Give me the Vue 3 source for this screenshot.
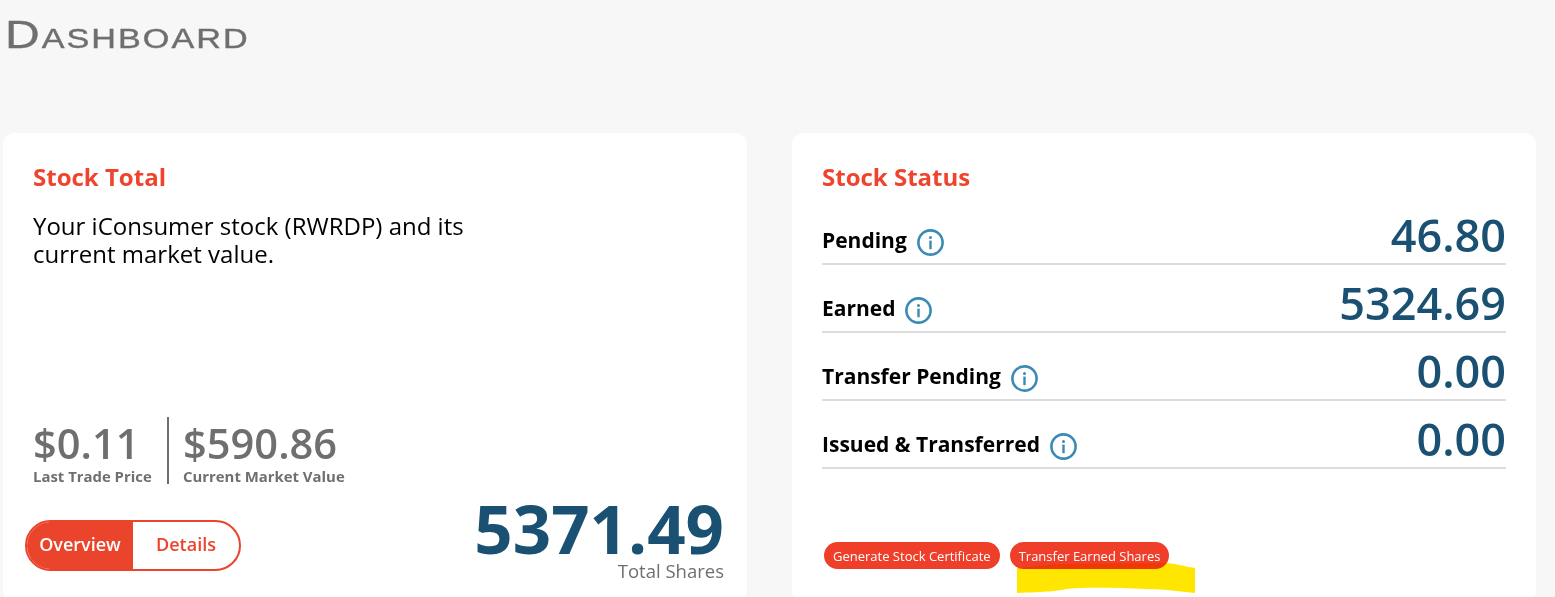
<script setup>
const rows = [
  { label: 'Pending', value: '46.80' },
  { label: 'Earned', value: '5324.69' },
  { label: 'Transfer Pending', value: '0.00' },
  { label: 'Issued & Transferred', value: '0.00' },
]
</script>

<template>
  <div class="page">
    <h1 class="heading">Dashboard</h1>
    <div class="cards">
      <section class="card left">
        <h2 class="title">Stock Total</h2>
        <p class="desc">Your iConsumer stock (RWRDP) and its current market value.</p>
        <div class="prices">
          <div class="price first">
            <div class="amount">$0.11</div>
            <div class="caption">Last Trade Price</div>
          </div>
          <div class="price second">
            <div class="amount">$590.86</div>
            <div class="caption">Current Market Value</div>
          </div>
        </div>
        <div class="bottom">
          <div class="toggle">
            <span class="tab active">Overview</span>
            <span class="tab">Details</span>
          </div>
          <div class="total">
            <div class="total-value">5371.49</div>
            <div class="total-label">Total Shares</div>
          </div>
        </div>
      </section>
      <section class="card right">
        <h2 class="title">Stock Status</h2>
        <div class="rows">
          <div v-for="r in rows" :key="r.label" class="row">
            <span class="label">{{ r.label }}</span>
            <svg class="info" viewBox="0 0 27 27" width="27" height="27" aria-hidden="true">
              <circle cx="13.5" cy="13.5" r="12.1" fill="none" stroke="#3a8ab5" stroke-width="2.6" />
              <circle cx="13.5" cy="8.6" r="1.5" fill="#3a8ab5" />
              <rect x="12.3" y="11.6" width="2.4" height="8.6" fill="#3a8ab5" />
            </svg>
            <span class="value">{{ r.value }}</span>
          </div>
        </div>
        <div class="actions">
          <button class="pill">Generate Stock Certificate</button>
          <button class="pill">Transfer Earned Shares</button>
        </div>
      </section>
    </div>
    <svg class="marker" viewBox="0 0 178 34" width="178" height="34" aria-hidden="true">
      <path d="M0 8 L40 4 L150 3 C160 4 170 7 178 8 L178 33 C165 32 150 29 130 29 C100 28 70 27 50 29 C40 31 30 32 0 33 Z" fill="#ffe600" />
    </svg>
  </div>
</template>

<style>
html, body { margin: 0; background: #f7f7f7; overflow: hidden; }
</style>

<style scoped>
.page {
  position: relative;
  height: 597px;
  overflow: hidden;
  background: #f7f7f7;
  font-family: "Open Sans", "Liberation Sans", sans-serif;
}
.heading {
  margin: 0;
  height: 133px;
  padding: 13px 0 0 5px;
  box-sizing: border-box;
  font-family: "Liberation Sans", Arial, sans-serif;
  font-variant: small-caps;
  font-weight: 400;
  font-size: 38px;
  line-height: 44px;
  letter-spacing: 1.6px;
  color: #6f6f6f;
  -webkit-text-stroke: 0.4px #6f6f6f;
  transform: scaleX(1.265);
  transform-origin: 5px 0;
}
.cards {
  display: grid;
  grid-template-columns: 744px 744px;
  column-gap: 45px;
  padding-left: 3px;
}
.card {
  background: #fff;
  border-radius: 12px;
  height: 470px;
  box-sizing: border-box;
  padding: 29px 30px 30px;
  position: relative;
}
.title {
  margin: 0;
  font-size: 24px;
  line-height: 30px;
  font-weight: 700;
  color: #ee442d;
}
.desc {
  margin: 20px 0 0;
  width: 450px;
  font-size: 24px;
  line-height: 28px;
  color: #000;
}
.left { display: flex; flex-direction: column; }
.prices {
  display: flex;
  margin-top: 149px;
  height: 67px;
}
.price { display: flex; flex-direction: column; }
.first { padding-right: 15px; border-right: 2px solid #6f6f6f; width: 119px; }
.second { padding-left: 14px; }
.amount {
  font-size: 41.6px;
  line-height: 50px;
  margin-top: 1px;
  font-weight: 600;
  color: #6f6f6f;
  white-space: nowrap;
}
.caption {
  font-size: 14.9px;
  line-height: 15px;
  margin-top: 1px;
  font-weight: 700;
  color: #6f6f6f;
  white-space: nowrap;
}
.bottom {
  display: flex;
  justify-content: space-between;
  align-items: flex-start;
  margin: 8px -7px 0 -8px;
}
.toggle {
  display: flex;
  margin-top: 28px;
  width: 216px;
  height: 51px;
  box-sizing: border-box;
  border: 2px solid #ea442c;
  border-radius: 26px;
  overflow: hidden;
}
.tab {
  display: flex;
  align-items: center;
  justify-content: center;
  flex: 1;
  padding-bottom: 3px;
  font-size: 18px;
  font-weight: 600;
  color: #ea442c;
}
.tab.active {
  flex: 0 0 106px;
  background: #ea442c;
  color: #fff;
}
.total { text-align: right; }
.total-value {
  font-size: 67.2px;
  line-height: 72px;
  font-weight: 700;
  color: #1a5172;
}
.total-label {
  margin-top: -4px;
  font-size: 18.5px;
  line-height: 22px;
  color: #6f6f6f;
}
.rows { margin-top: 17px; }
.row {
  display: flex;
  align-items: flex-end;
  height: 68px;
  box-sizing: border-box;
  border-bottom: 2px solid #dcdcdc;
}
.row:first-child { height: 56px; }
.label {
  font-size: 21px;
  line-height: 28px;
  font-weight: 700;
  color: #000;
  margin-bottom: 9px;
}
.info { margin: 0 0 7px 10px; flex: none; }
.value {
  margin-left: auto;
  font-size: 45px;
  line-height: 56px;
  font-weight: 600;
  color: #1a5172;
}
.actions {
  position: absolute;
  left: 32px;
  top: 409px;
  display: flex;
  gap: 10px;
}
.pill {
  height: 27px;
  padding: 0 9px;
  border: 0;
  border-radius: 14px;
  background: #ef3f2a;
  color: #fff;
  font-family: inherit;
  font-size: 13px;
  white-space: nowrap;
}
.marker {
  position: absolute;
  left: 1017px;
  top: 560px;
  mix-blend-mode: multiply;
}
</style>
